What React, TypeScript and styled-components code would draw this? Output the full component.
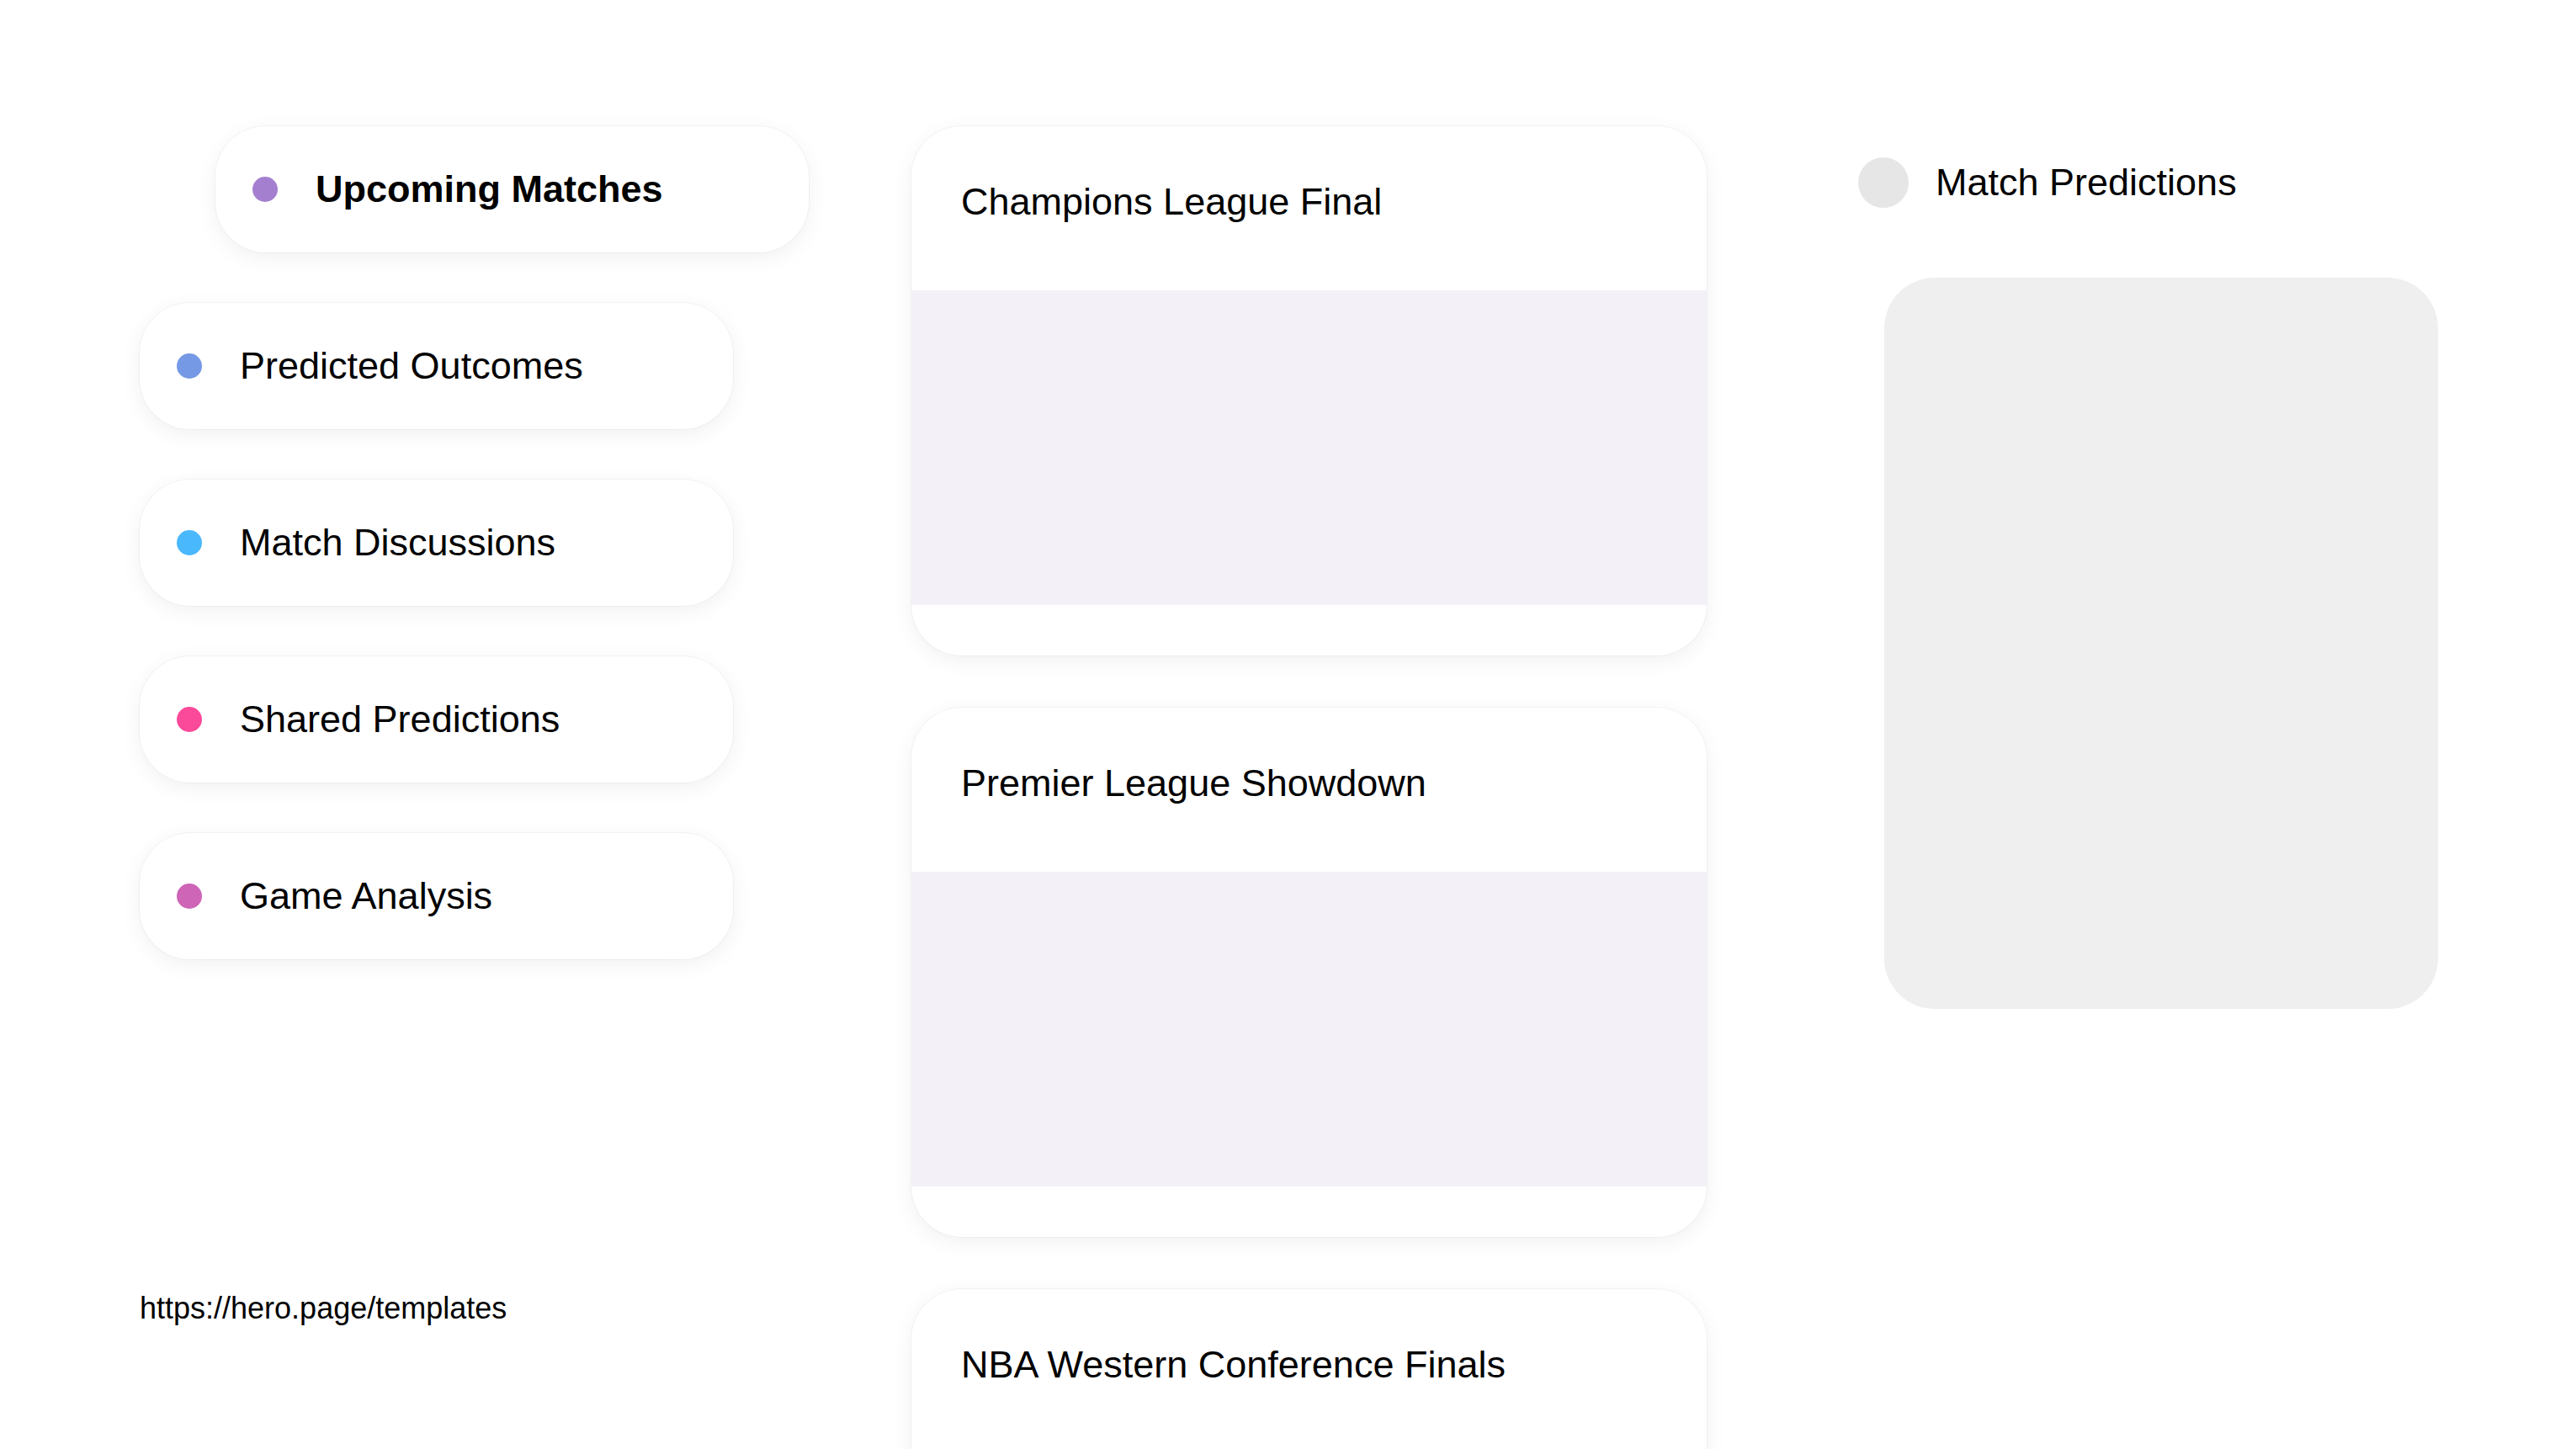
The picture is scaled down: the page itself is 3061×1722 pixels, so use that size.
import styled, { createGlobalStyle } from "styled-components";

const GlobalStyle = createGlobalStyle`
  html, body {
    margin: 0;
    padding: 0;
    background: #ffffff;
    font-family: "Liberation Sans", Arial, sans-serif;
    color: #000000;
  }
`;

const navItems = [
  { label: "Upcoming Matches", color: "#a57fcf", active: true },
  { label: "Predicted Outcomes", color: "#7699e5" },
  { label: "Match Discussions", color: "#4ab8fc" },
  { label: "Shared Predictions", color: "#fc4a9a" },
  { label: "Game Analysis", color: "#ce65b6" },
];

const matches = [
  "Champions League Final",
  "Premier League Showdown",
  "NBA Western Conference Finals",
];

export default function App() {
  return (
    <>
      <GlobalStyle />
      <Page>
        <Sidebar>
          <NavList>
            {navItems.map((item) => (
              <NavPill key={item.label} $active={item.active}>
                <Dot $color={item.color} />
                <NavLabel $active={item.active}>{item.label}</NavLabel>
              </NavPill>
            ))}
          </NavList>
          <FooterLink>https://hero.page/templates</FooterLink>
        </Sidebar>

        <Feed>
          {matches.map((title) => (
            <MatchCard key={title}>
              <CardHeader>{title}</CardHeader>
              <CardMedia />
              <CardFooter />
            </MatchCard>
          ))}
        </Feed>

        <Aside>
          <AsideHeader>
            <Avatar />
            <AsideTitle>Match Predictions</AsideTitle>
          </AsideHeader>
          <Placeholder />
        </Aside>
      </Page>
    </>
  );
}

const Page = styled.div`
  display: flex;
  align-items: flex-start;
  height: 1722px;
  overflow: hidden;
  padding: 150px 0 0 166px;
  box-sizing: border-box;
`;

const Sidebar = styled.div`
  display: flex;
  flex-direction: column;
  width: 917px;
  flex-shrink: 0;
`;

const NavList = styled.div`
  display: flex;
  flex-direction: column;
  gap: 60px;
`;

const NavPill = styled.div<{ $active?: boolean }>`
  display: flex;
  align-items: center;
  gap: 45px;
  width: 705px;
  height: 150px;
  box-sizing: border-box;
  padding: 0 44px;
  margin-left: ${(p) => (p.$active ? "90px" : "0")};
  background: #ffffff;
  border-radius: 60px;
  box-shadow: 0 0 0 1px rgba(0, 0, 0, 0.035), 0 6px 26px rgba(0, 0, 0, 0.06);
`;

const Dot = styled.span<{ $color: string }>`
  width: 30px;
  height: 30px;
  border-radius: 50%;
  background: ${(p) => p.$color};
  flex-shrink: 0;
`;

const NavLabel = styled.span<{ $active?: boolean }>`
  font-size: 45px;
  font-weight: ${(p) => (p.$active ? 700 : 400)};
  white-space: nowrap;
`;

const FooterLink = styled.div`
  margin-top: 394px;
  font-size: 36px;
`;

const Feed = styled.div`
  display: flex;
  flex-direction: column;
  gap: 62px;
  width: 945px;
  flex-shrink: 0;
`;

const MatchCard = styled.div`
  display: flex;
  flex-direction: column;
  background: #ffffff;
  border-radius: 60px;
  overflow: hidden;
  box-shadow: 0 0 0 1px rgba(0, 0, 0, 0.035), 0 6px 26px rgba(0, 0, 0, 0.06);
`;

const CardHeader = styled.div`
  height: 195px;
  box-sizing: border-box;
  padding: 64px 59px 0;
  font-size: 45px;
  white-space: nowrap;
`;

const CardMedia = styled.div`
  height: 374px;
  background: #f3f1f7;
`;

const CardFooter = styled.div`
  height: 60px;
`;

const Aside = styled.div`
  display: flex;
  flex-direction: column;
  margin-left: 180px;
  padding-top: 37px;
  width: 690px;
`;

const AsideHeader = styled.div`
  display: flex;
  align-items: center;
  gap: 32px;
  height: 60px;
`;

const Avatar = styled.span`
  width: 60px;
  height: 60px;
  border-radius: 50%;
  background: #e6e6e6;
  flex-shrink: 0;
`;

const AsideTitle = styled.span`
  font-size: 45px;
  white-space: nowrap;
`;

const Placeholder = styled.div`
  margin: 83px 0 0 31px;
  width: 658px;
  height: 869px;
  border-radius: 60px;
  background: #efefef;
`;
